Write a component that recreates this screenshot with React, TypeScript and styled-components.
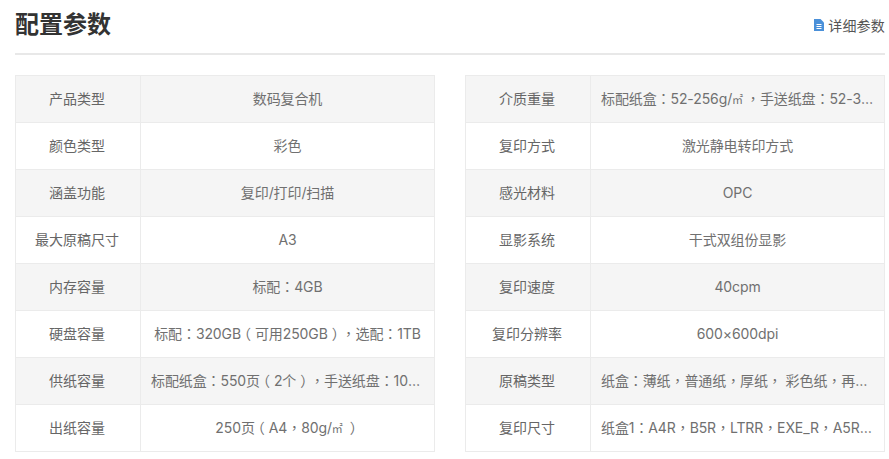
import React from "react";
import styled, { createGlobalStyle } from "styled-components";

const Global = createGlobalStyle`
  html, body { margin: 0; padding: 0; background: #fff; }
  body { font-family: Inter, "Noto Sans CJK SC", sans-serif; text-spacing-trim: space-all; }
`;
const Page = styled.div`
  width: 889px; height: 459px; box-sizing: border-box; padding: 0 4px 0 15px; overflow: hidden;
`;
const Header = styled.header`
  height: 55px; box-sizing: border-box; border-bottom: 2px solid #e8e8e8;
  display: flex; justify-content: space-between; align-items: flex-start;
`;
const Title = styled.h2`
  margin: 5px 0 0; font-size: 24px; line-height: 36px; font-weight: 700; color: #333;
  font-family: "Noto Sans CJK SC", sans-serif;
`;
const More = styled.a`
  margin-top: 15px; display: flex; align-items: center; gap: 4px; font-size: 14px; line-height: 20px; color: #555;
  letter-spacing: 0.2px;
  font-family: "Noto Sans CJK SC", sans-serif;
`;
const Tables = styled.div`
  margin-top: 20px; display: grid; grid-template-columns: 420px 420px; column-gap: 30px;
`;
const Table = styled.div`
  border: 1px solid #ebebeb; border-bottom: 0;
`;
const Row = styled.div<{ $shade: boolean }>`
  display: grid; grid-template-columns: 125px 1fr; height: 47px; box-sizing: border-box;
  border-bottom: 1px solid #ebebeb;
  background: ${(p) => (p.$shade ? "#f5f5f5" : "#fff")};
`;
const Label = styled.div`
  border-right: 1px solid #ebebeb; padding-right: 2px; text-align: center; line-height: 44px; font-size: 14px; color: #666;
  font-family: "Noto Sans CJK SC", sans-serif;
`;
const Value = styled.div`
  padding: 0 10px; min-width: 0; text-align: center; line-height: 46px; font-size: 14px; color: #707070;
  letter-spacing: -0.1px;
  white-space: nowrap; overflow: hidden; text-overflow: ellipsis;
`;
const Punct = styled.span`
  font-family: "Noto Sans CJK TC", sans-serif;
  line-height: 0;
`;
const OpenParen = styled(Punct)`
  margin: 0 4px 0 -4px;
`;
const CloseParen = styled(Punct)`
  margin: 0 -4px 0 4px;
`;
const Unit = styled.span`
  font-family: "Noto Sans CJK SC", sans-serif;
  font-size: 11px;
  line-height: 0;
  margin-right: 3px;
`;

const left = [
  ["产品类型", "数码复合机"],
  ["颜色类型", "彩色"],
  ["涵盖功能", "复印/打印/扫描"],
  ["最大原稿尺寸", "A3"],
  ["内存容量", "标配：4GB"],
  ["硬盘容量", "标配：320GB（可用250GB），选配：1TB"],
  ["供纸容量", "标配纸盒：550页（2个），手送纸盘：100页，最大供纸容量：6650页"],
  ["出纸容量", "250页（A4，80g/㎡）"],
];
const right = [
  ["介质重量", "标配纸盒：52-256g/㎡，手送纸盘：52-300g/㎡，双面：52-256g/㎡"],
  ["复印方式", "激光静电转印方式"],
  ["感光材料", "OPC"],
  ["显影系统", "干式双组份显影"],
  ["复印速度", "40cpm"],
  ["复印分辨率", "600×600dpi"],
  ["原稿类型", "纸盒：薄纸，普通纸，厚纸， 彩色纸，再生纸，信头纸，预打印纸"],
  ["复印尺寸", "纸盒1：A4R，B5R，LTRR，EXE_R，A5R，B6R，自定义尺寸"],
];

function Part({ text }: { text: string }) {
  if (text === "㎡") return <Unit>{text}</Unit>;
  if (text === "（") return <OpenParen>{text}</OpenParen>;
  if (text === "）") return <CloseParen>{text}</CloseParen>;
  if (text === "：" || text === "，") return <Punct>{text}</Punct>;
  return <>{text}</>;
}

function Text({ value }: { value: string }) {
  return (
    <>
      {value.split(/([：，（）㎡])/).map((part, i) => (
        <Part key={i} text={part} />
      ))}
    </>
  );
}

function Spec({ rows }: { rows: string[][] }) {
  return (
    <Table>
      {rows.map(([k, v], i) => (
        <Row key={k} $shade={i % 2 === 0}>
          <Label>{k}</Label>
          <Value><Text value={v} /></Value>
        </Row>
      ))}
    </Table>
  );
}

export default function App() {
  return (
    <Page>
      <Global />
      <Header>
        <Title>配置参数</Title>
        <More>
          <svg width="10" height="12" viewBox="0 0 10 12">
            <path d="M0 0h6.5L10 3.5V12H0z" fill="#4a90d9" />
            <path d="M2.5 5.5h5M2.5 7.5h5M2.5 9.5h5" stroke="#fff" strokeWidth="1" />
          </svg>
          详细参数
        </More>
      </Header>
      <Tables>
        <Spec rows={left} />
        <Spec rows={right} />
      </Tables>
    </Page>
  );
}
